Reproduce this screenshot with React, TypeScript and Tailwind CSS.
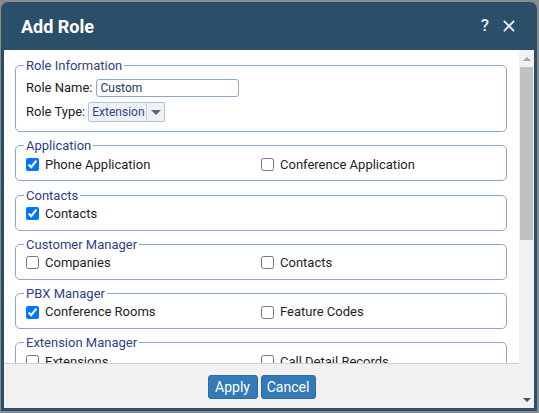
import { X } from 'lucide-react'

type Item = { label: string; checked?: boolean }
type Group = { title: string; items: Item[] }

const groups: Group[] = [
  { title: 'Application', items: [{ label: 'Phone Application', checked: true }, { label: 'Conference Application' }] },
  { title: 'Contacts', items: [{ label: 'Contacts', checked: true }] },
  { title: 'Customer Manager', items: [{ label: 'Companies' }, { label: 'Contacts' }] },
  { title: 'PBX Manager', items: [{ label: 'Conference Rooms', checked: true }, { label: 'Feature Codes' }] },
  { title: 'Extension Manager', items: [{ label: 'Extensions' }, { label: 'Call Detail Records' }] },
  { title: 'Queue Manager', items: [{ label: 'Queues' }, { label: 'Queue Reports' }] },
]

// group box drawn like a fieldset: the title sits on the top border
function Box({ title, children, className = '' }: { title: string; children: React.ReactNode; className?: string }) {
  return (
    <div className={`ml-[11px] mr-[12px] rounded-[5px] border border-[#8fa6cc] px-[10px] ${className}`}>
      <div className="-mt-[8px] ml-[-2px] w-fit bg-white px-[2px] text-[13px] leading-[15px] text-[#2f3f86]">{title}</div>
      {children}
    </div>
  )
}

function ScrollBar() {
  return (
    <div className="flex w-[15px] shrink-0 flex-col bg-[#f1f1f1]">
      <div className="flex h-[17px] items-center justify-center">
        <span className="h-0 w-0 border-x-[4px] border-b-[4px] border-x-transparent border-b-[#a3a3a3]" />
      </div>
      <div className="mx-[1px] h-[173px] bg-[#c1c1c1]" />
      <div className="flex-1" />
      <div className="flex h-[17px] items-center justify-center">
        <span className="h-0 w-0 border-x-[4px] border-t-[4px] border-x-transparent border-t-[#505050]" />
      </div>
    </div>
  )
}

export default function App() {
  return (
    <div className="h-[413px] w-[539px] bg-[#8b8b8b] pl-[1px] pt-[2px]" style={{ fontFamily: 'Roboto, "Liberation Sans", sans-serif' }}>
      <div className="flex h-[409px] w-[536px] flex-col overflow-hidden rounded-t-[7px] border-x-[3px] border-b-[3px] border-[#2c4f69] bg-[#2c4f69]">
        {/* header */}
        <div className="flex h-[48px] shrink-0 items-center justify-between pl-[17px] pr-[16px] text-white">
          <span className="text-[18px] font-bold">Add Role</span>
          <div className="flex items-center gap-[11px] text-[#e8eef3]">
            <span className="text-[17px] font-medium">?</span>
            <X className="h-[18px] w-[18px]" strokeWidth={2.5} />
          </div>
        </div>

        {/* body */}
        <div className="flex min-h-0 flex-1 bg-white">
          <div className="flex min-w-0 flex-1 flex-col">
            <div className="min-h-0 flex-1 overflow-hidden">
              <Box title="Role Information" className="mt-[15px] pb-[9px]">
                <div className="mt-[5px] flex h-[20px] items-center text-[13px] text-[#222]">
                  <span>Role Name:</span>
                  <div className="ml-[3px] flex h-[18px] w-[143px] items-center rounded-[3px] border border-[#8fa6cc] px-[4px] text-[12px] text-[#253763]">
                    Custom
                  </div>
                </div>
                <div className="mt-[4px] flex h-[20px] items-center text-[13px] text-[#222]">
                  <span>Role Type:</span>
                  <div className="ml-[3px] flex h-[20px] w-[77px] items-center rounded-[2px] border border-[#b5c2d6] bg-[#eef2f7]">
                    <span className="flex-1 pl-[3px] text-[12px] text-[#2e4686]">Extension</span>
                    <span className="flex h-full w-[18px] items-center justify-center border-l border-[#c5cfdd]">
                      <span className="h-0 w-0 border-x-[5px] border-t-[5px] border-x-transparent border-t-[#5d6570]" />
                    </span>
                  </div>
                </div>
              </Box>
              {groups.map((g) => (
                <Box key={g.title} title={g.title} className="mt-[13.25px] pb-[7px]">
                  <div className="mt-[2px] grid grid-cols-2 text-[13px] text-[#1d1d2b]">
                    {g.items.map((it) => (
                      <label key={it.label} className="flex h-[18px] items-center gap-[6px]">
                        <input type="checkbox" defaultChecked={it.checked} className="m-0 h-[13px] w-[13px]" />
                        <span>{it.label}</span>
                      </label>
                    ))}
                  </div>
                </Box>
              ))}
            </div>

            {/* footer */}
            <div className="flex h-[45px] shrink-0 justify-center gap-[3px] border-t border-[#cfcfcf] bg-[#f1f1f1] pt-[11px]">
              <button type="button" className="h-[24px] w-[50px] rounded-[3px] border border-[#2e6da4] bg-[#337ab7] text-[14px] text-white">
                Apply
              </button>
              <button type="button" className="h-[24px] w-[55px] rounded-[3px] border border-[#2e6da4] bg-[#337ab7] text-[14px] text-white">
                Cancel
              </button>
            </div>
          </div>
          <ScrollBar />
        </div>
      </div>
    </div>
  )
}
